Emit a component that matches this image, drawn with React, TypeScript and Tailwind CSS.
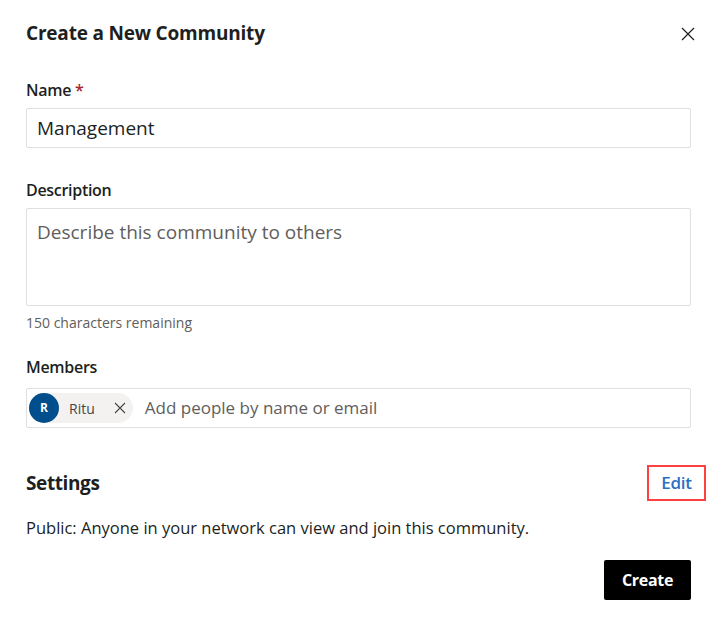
// ─── Create community dialog ─────────────────────────────────────────────
import React from "react";

const font = { fontFamily: '"Open Sans", "Noto Sans", sans-serif' };

export default function App() {
  return (
    <div className="h-[625px] w-[721px] bg-white text-[#201f1e]" style={font}>
      <div className="pl-[26px] pr-[30px]">
        {/* Header */}
        <div className="flex h-[66px] items-center justify-between pt-[1px]">
          <h1 className="text-[19px] font-bold tracking-[-0.2px]">Create a New Community</h1>
          <button className="mr-[-4px] text-[#201f1e]" aria-label="Close">
            <svg width="14" height="14" viewBox="0 0 14 14" stroke="currentColor" strokeWidth="1.2">
              <path d="M1 1l12 12M13 1L1 13" />
            </svg>
          </button>
        </div>

        {/* Name */}
        <label className="mt-[12px] block text-[16px] font-semibold tracking-[-0.3px]">
          Name <span className="text-[#a4262c]">*</span>
        </label>
        <div className="mt-[6px] flex h-[40px] items-center rounded-[2px] border border-[#e1dfdd] px-[10px] text-[19px]">
          Management
        </div>

        {/* Description */}
        <label className="mt-[30px] block text-[16px] font-semibold tracking-[-0.3px]">Description</label>
        <div className="mt-[6px] h-[98px] rounded-[2px] border border-[#e1dfdd] px-[10px] pt-[9px] text-[19px] text-[#605e5c]">
          Describe this community to others
        </div>
        <p className="mt-[6px] text-[14px] text-[#605e5c]">150 characters remaining</p>

        {/* Members */}
        <label className="mt-[22px] block text-[16px] font-semibold tracking-[-0.3px]">Members</label>
        <div className="mt-[9px] flex h-[40px] items-center gap-[12px] rounded-[2px] border border-[#e1dfdd] pl-[2px]">
          <div className="flex h-[30px] items-center rounded-full bg-[#f3f2f1] pr-[7px]">
            <div className="flex h-[30px] w-[30px] items-center justify-center rounded-full bg-[#004e8c] text-[12px] font-bold text-white">
              R
            </div>
            <span className="ml-[10px] text-[14px] text-[#484644]">Ritu</span>
            <svg className="ml-[19px]" width="12" height="12" viewBox="0 0 12 12" stroke="#484644" strokeWidth="1.1">
              <path d="M1 1l10 10M11 1L1 11" />
            </svg>
          </div>
          <span className="text-[17px] text-[#605e5c]">Add people by name or email</span>
        </div>

        {/* Settings */}
        <div className="mt-[37px] flex items-center justify-between">
          <h2 className="text-[19px] font-bold tracking-[-0.4px]">Settings</h2>
          <div className="mr-[-15px] flex h-[36px] w-[59px] items-center justify-center border-[2.5px] border-[#ff4040]">
            <span className="text-[17px] font-semibold tracking-[-0.3px] text-[#2b6fc4]">Edit</span>
          </div>
        </div>
        <p className="mt-[15px] text-[16.5px]">
          Public: Anyone in your network can view and join this community.
        </p>

        {/* Footer */}
        <div className="mt-[19px] flex justify-end">
          <button className="h-[40px] w-[87px] rounded-[2px] bg-black text-[16px] font-bold tracking-[-0.3px] text-white">
            Create
          </button>
        </div>
      </div>
    </div>
  );
}
